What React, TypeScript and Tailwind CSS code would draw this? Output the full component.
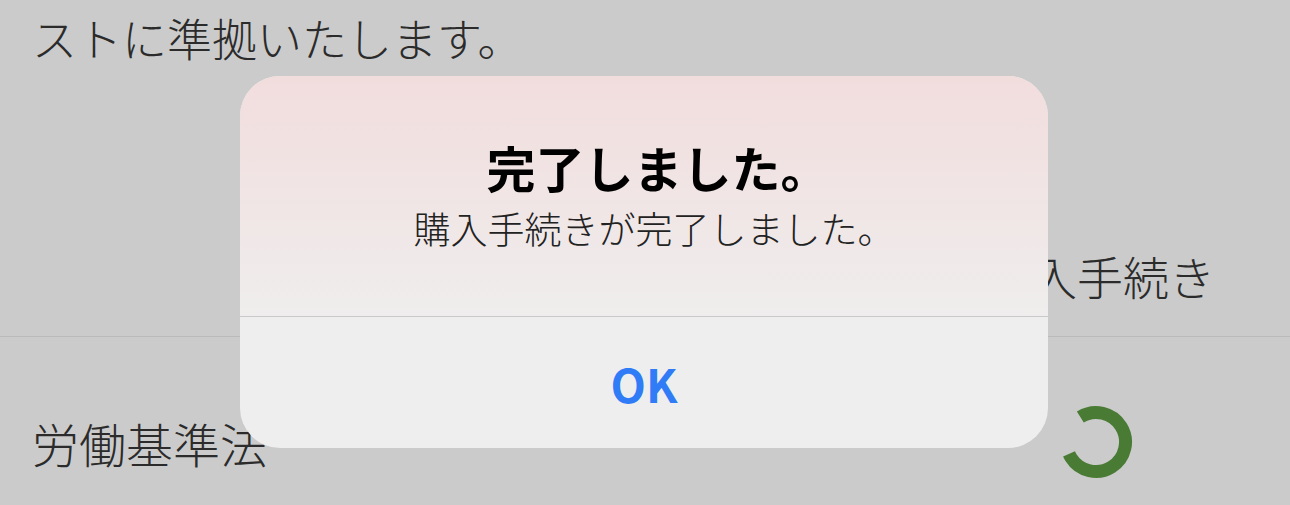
import React from 'react'

const jp = { fontFamily: '"Noto Sans CJK JP", "Noto Sans", sans-serif' }

function Spinner() {
  // open ring, gap on the left
  return (
    <svg width="74" height="74" viewBox="0 0 74 74">
      <circle
        cx="37"
        cy="37"
        r="29.5"
        fill="none"
        stroke="#4a7b35"
        strokeWidth="13"
        strokeDasharray="143 42"
        transform="rotate(-122 37 37)"
      />
    </svg>
  )
}

function Alert() {
  return (
    <div className="absolute left-[240px] top-[76px] w-[808px] h-[372px] rounded-[40px] overflow-hidden flex flex-col bg-[#efeeee]">
      <div className="h-[240px] flex flex-col items-center bg-gradient-to-b from-[#f2dddd] to-[#efeded]">
        <div className="mt-[66px] ml-[28px] text-[49px] leading-none font-bold text-black">完了しました。</div>
        <div className="mt-[19px] ml-[20px] text-[37px] leading-none font-light text-[#222]">購入手続きが完了しました。</div>
      </div>
      <div className="h-px bg-[#c9c9c9]" />
      <div className="flex-1 flex items-center justify-center">
        <span className="text-[46px] font-bold text-[#2f7cf6] leading-none">OK</span>
      </div>
    </div>
  )
}

export default function App() {
  return (
    <div className="relative w-[1290px] h-[505px] overflow-hidden bg-[#cbcbcb] text-[#2b2b2b] font-light" style={jp}>
      <div className="pl-[32px] pt-[15px] text-[45px] leading-none">ストに準拠いたします。</div>

      <div className="mt-[192px] flex justify-end pr-[75px] text-[46px] leading-none">購入手続き</div>

      <div className="mt-[38px] h-px bg-[#bababa]" />

      <div className="mt-[68px] flex items-center">
        <span className="pl-[32px] text-[47px] leading-none">労働基準法</span>
        <div className="ml-auto mr-[157px]">
          <Spinner />
        </div>
      </div>

      <Alert />
    </div>
  )
}
